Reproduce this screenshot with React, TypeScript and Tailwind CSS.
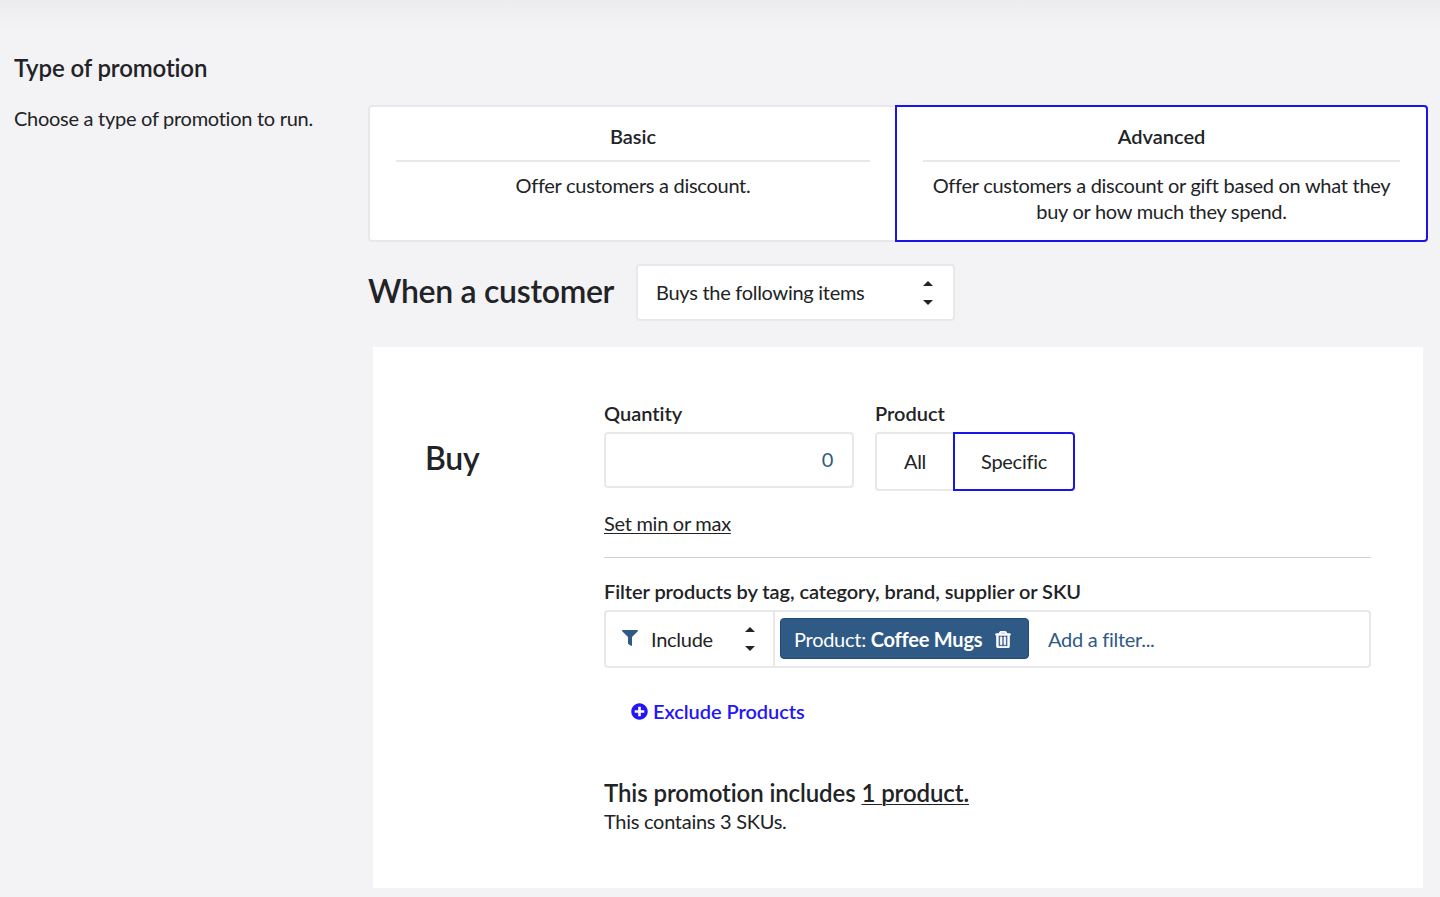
import React from 'react';
import { FaFilter, FaPlusCircle, FaRegTrashAlt } from 'react-icons/fa';

const Updown: React.FC = () => (
  <svg width="10" height="24" viewBox="0 0 10 24" className="text-[#212326] shrink-0" fill="currentColor">
    <path d="M5 0 L10 5 L0 5 Z" />
    <path d="M5 24 L10 19 L0 19 Z" />
  </svg>
);

const App: React.FC = () => {
  return (
    <div className="w-[1440px] h-[897px] overflow-hidden bg-[#f3f2f5] text-[#212326] font-['Lato','Liberation_Sans',sans-serif] text-[20px] leading-[26px] tracking-[-0.28px] [font-variant-ligatures:none]">
      <div className="h-[30px] bg-gradient-to-b from-[#ececef] to-[#f3f2f5]" />
      <div className="flex">
        <div className="w-[368px] shrink-0 pl-[14px]">
          <h2 className="mt-[22px] text-[24px] leading-[32px] font-semibold tracking-[-0.13px]">Type of promotion</h2>
          <p className="mt-[21px]">Choose a type of promotion to run.</p>
        </div>
        <div className="w-[1060px]">
          <div className="flex mt-[75px] h-[137px]">
            <div className="w-[528px] bg-white border-2 border-[#e8e8ea] rounded-l-[4px] border-r-0 px-[26px] pt-[16px] text-center">
              <div className="font-semibold pb-[11px] border-b-2 border-[#e8e8ea] tracking-normal">Basic</div>
              <p className="mt-[10px]">Offer customers a discount.</p>
            </div>
            <div className="w-[533px] -ml-px bg-white border-2 border-[#1a14e8] rounded-r-[4px] px-[26px] pt-[16px] text-center">
              <div className="font-semibold pb-[11px] border-b-2 border-[#e8e8ea] tracking-normal">Advanced</div>
              <p className="mt-[10px]">Offer customers a discount or gift based on what they buy or how much they spend.</p>
            </div>
          </div>
          <div className="flex items-center mt-[22px]">
            <h2 className="text-[32px] leading-[54px] font-semibold w-[268px] mb-[3px] tracking-[-0.3px]">When a customer</h2>
            <div className="w-[319px] h-[57px] bg-white border-2 border-[#e8e8ea] rounded-[4px] flex items-center justify-between pl-[18px] pr-[20px]">
              <span className="mb-[1px]">Buys the following items</span>
              <Updown />
            </div>
          </div>
          <div className="ml-[5px] mt-[26px] w-[1050px] h-[541px] bg-white flex">
            <div className="w-[231px] shrink-0 pl-[52px] pt-[91px] text-[32px] leading-[40px] font-semibold">Buy</div>
            <div className="w-[767px] pt-[53px]">
              <div className="flex gap-[21px]">
                <div>
                  <label className="block font-semibold tracking-normal">Quantity</label>
                  <div className="mt-[6px] w-[250px] h-[56px] bg-white border-2 border-[#e8e8ea] rounded-[4px] flex items-center justify-end pr-[19px] pb-[2px] text-[#2f5a85]">0</div>
                </div>
                <div>
                  <label className="block font-semibold tracking-normal">Product</label>
                  <div className="mt-[6px] flex h-[59px]">
                    <div className="w-[78px] border-2 border-r-0 border-[#e8e8ea] rounded-l-[4px] flex items-center justify-center pb-[1px]">All</div>
                    <div className="w-[122px] border-2 border-[#1a14e8] rounded-r-[4px] flex items-center justify-center pb-[1px] [font-variant-ligatures:normal]">Specific</div>
                  </div>
                </div>
              </div>
              <a className="block mt-[19px] w-fit underline decoration-1 underline-offset-2">Set min or max</a>
              <div className="mt-[21px] h-[1px] bg-[#d0d0d3]" />
              <label className="block mt-[20px] font-semibold tracking-[-0.07px]">Filter products by tag, category, brand, supplier or SKU</label>
              <div className="mt-[6px] h-[58px] border-2 border-[#e8e8ea] rounded-[4px] flex items-stretch">
                <div className="w-[169px] border-r-2 border-[#e8e8ea] flex items-center pl-[16px] pr-[18px]">
                  <FaFilter className="text-[#2f5a85] w-[16px] h-[16px] mb-[3px]" />
                  <span className="ml-[13px] flex-1">Include</span>
                  <Updown />
                </div>
                <div className="flex items-center pl-[5px]">
                  <div className="w-[249px] h-[41px] mb-[2px] pt-[2px] bg-[#2f5a85] rounded-[4px] border border-[#234a73] text-white flex items-center pl-[13px]">
                    <span>Product: <span className="font-bold tracking-[-0.2px]">Coffee Mugs</span></span>
                    <FaRegTrashAlt className="ml-[13px] w-[16px] h-[17px]" stroke="currentColor" strokeWidth={24} />
                  </div>
                  <span className="ml-[19px] text-[#2f5a85] [font-variant-ligatures:normal]">Add a filter...</span>
                </div>
              </div>
              <div className="mt-[30px] ml-[27px] flex items-center gap-[5px] text-[#2415f5] font-semibold tracking-[-0.05px]">
                <FaPlusCircle className="w-[17px] h-[17px]" />
                <span>Exclude Products</span>
              </div>
              <p className="mt-[53px] text-[24px] leading-[32px] font-semibold tracking-[-0.1px]">
                This promotion includes <span className="underline decoration-1 underline-offset-2">1 product.</span>
              </p>
              <p className="-mt-px">This contains 3 SKUs.</p>
            </div>
          </div>
        </div>
      </div>
    </div>
  );
};

export default App;
